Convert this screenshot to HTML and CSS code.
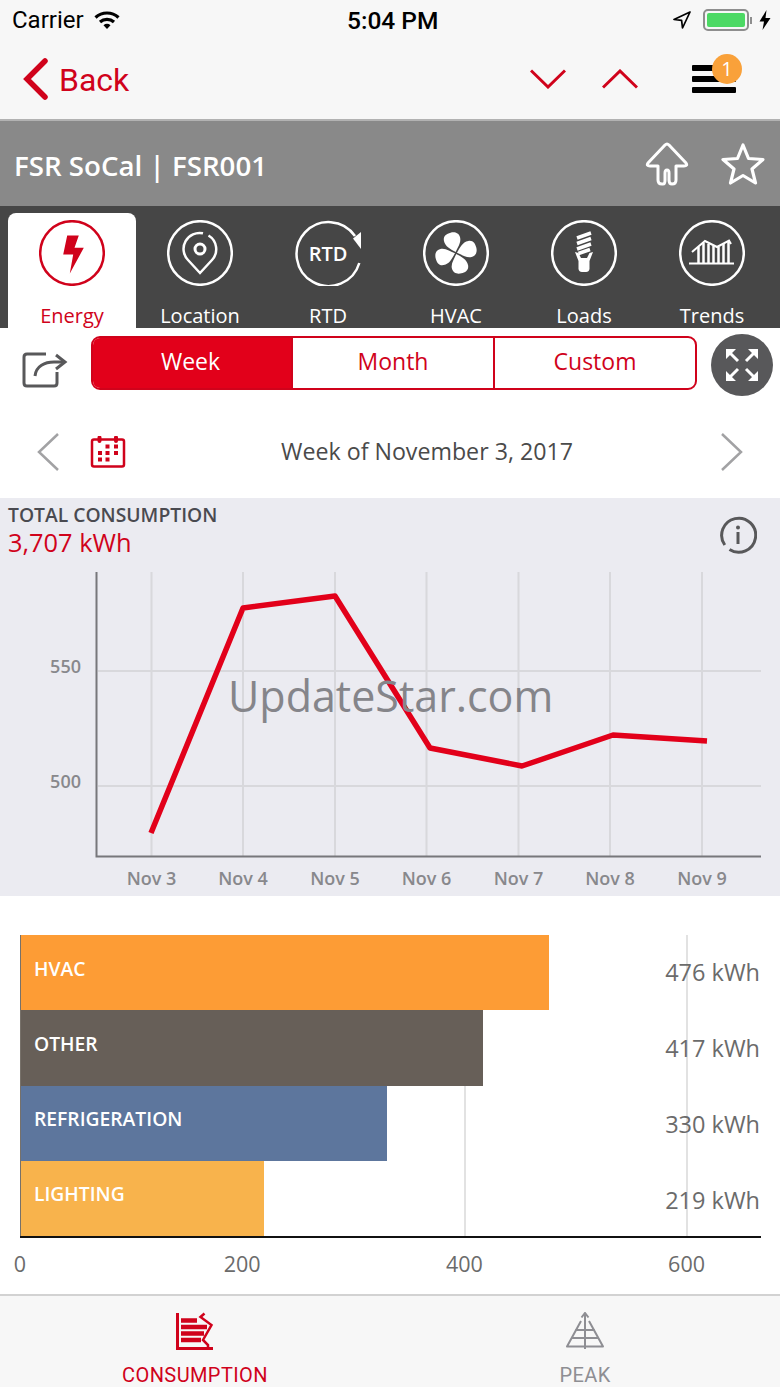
FILE: index.html
```html
<!DOCTYPE html>
<html lang="en">
<head>
    <meta charset="UTF-8">
    <meta name="viewport" content="width=device-width, initial-scale=1.0">
    <title>FSR SoCal Energy</title>
    <link rel="stylesheet" href="styles.css">
</head>
<body>
    <div class="status-bar">
        <div class="status-left">
            <span>Carrier</span>
            <svg class="wifi" viewBox="0 0 26 20" width="26" height="20">
                <path d="M1.5 7.5C8 1.5 18 1.5 24.5 7.5" fill="none" stroke="#000" stroke-width="3.2"/>
                <path d="M6 12C10 8.4 16 8.4 20 12" fill="none" stroke="#000" stroke-width="3.2"/>
                <path d="M9.5 15.2C11.6 13.4 14.4 13.4 16.5 15.2L13 19Z" fill="#000"/>
            </svg>
        </div>
        <div class="status-time">5:04 PM</div>
        <div class="status-right">
            <svg class="location-arrow" viewBox="0 0 18 18" width="18" height="18">
                <path d="M17 1L1 8.5L8.6 9.4L9.5 17Z" fill="none" stroke="#000" stroke-width="1.7" stroke-linejoin="round"/>
            </svg>
            <div class="battery"><div class="battery-fill"></div></div>
            <div class="battery-nub"></div>
            <svg viewBox="0 0 12 20" width="12" height="20">
                <path d="M7.5 0L0.5 11.5H5L3.5 20L11.5 8H6.5Z" fill="#000"/>
            </svg>
        </div>
    </div>

    <div class="nav-bar">
        <div class="back">
            <svg viewBox="0 0 28 42" width="28" height="42">
                <path d="M24 3L6 21L24 39" fill="none" stroke="#d0021b" stroke-width="5.5" stroke-linecap="round"/>
            </svg>
            <span>Back</span>
        </div>
        <div class="nav-actions">
            <svg viewBox="0 0 36 20" width="36" height="20">
                <path d="M1 1.5L18 18L35 1.5" fill="none" stroke="#d0021b" stroke-width="3"/>
            </svg>
            <svg viewBox="0 0 36 20" width="36" height="20">
                <path d="M1 18.5L18 2L35 18.5" fill="none" stroke="#d0021b" stroke-width="3"/>
            </svg>
            <div class="menu">
                <div class="menu-line"></div>
                <div class="menu-line"></div>
                <div class="menu-line"></div>
                <div class="badge">1</div>
            </div>
        </div>
    </div>

    <div class="title-bar">
        <h1>FSR SoCal | FSR001</h1>
        <div class="title-icons">
            <svg viewBox="0 0 44 44" width="44" height="44">
                <path d="M13 24V38Q13 42 17 42H18Q20 42 20 38V31Q20 28 22 28Q24 28 24 31V38Q24 42 27 42Q31 42 31 38V24H39Q43 24 41 21L24 3Q22 1 20 3L3 21Q1 24 5 24Z" fill="none" stroke="#fff" stroke-width="3" stroke-linejoin="round"/>
            </svg>
            <svg viewBox="0 0 44 44" width="44" height="44">
                <path d="M22 3L27.5 16.5L42 17.500L31 27L34.500 41L22 33.500L9.500 41L13 27L2 17.500L16.500 16.500Z" fill="none" stroke="#fff" stroke-width="3.200" stroke-linejoin="round"/>
            </svg>
        </div>
    </div>

    <div class="tabs">
        <div class="tab tab-active">
            <svg class="tab-icon" viewBox="0 0 66 66">
                <circle cx="33" cy="33" r="31.800"/>
                <path class="solid" d="M28.200 15.500H39.800L35.500 27.800H44.800L30.800 53.500L34.200 34.500H24.200Z"/>
            </svg>
            <span>Energy</span>
        </div>
        <div class="tab">
            <svg class="tab-icon" viewBox="0 0 66 66">
                <circle cx="33" cy="33" r="31.800"/>
                <path d="M36 13.300A16 16 0 0 0 21 40L33 53L45 40A16 16 0 0 0 41.500 15.500"/>
                <circle class="pin-dot" cx="33" cy="29" r="5"/>
            </svg>
            <span>Location</span>
        </div>
        <div class="tab">
            <svg class="tab-icon" viewBox="0 0 66 66">
                <path d="M64.300 43A32 32 0 1 1 60 16"/>
                <path class="solid" d="M66 12V29L58 18.500Z"/>
                <text class="rtd-text" x="33" y="40.500" text-anchor="middle">RTD</text>
            </svg>
            <span>RTD</span>
        </div>
        <div class="tab">
            <svg class="tab-icon" viewBox="0 0 66 66">
                <circle cx="33" cy="33" r="31.800"/>
                <g class="solid">
                    <path d="M33 32C29 28 24 24 24.500 18C25 13 29 12 33 12C37 12 41 14 41 19C41 24 36 28 33 32Z" transform="rotate(-15 33 33)"/>
                    <path d="M33 32C29 28 24 24 24.500 18C25 13 29 12 33 12C37 12 41 14 41 19C41 24 36 28 33 32Z" transform="rotate(75 33 33)"/>
                    <path d="M33 32C29 28 24 24 24.500 18C25 13 29 12 33 12C37 12 41 14 41 19C41 24 36 28 33 32Z" transform="rotate(165 33 33)"/>
                    <path d="M33 32C29 28 24 24 24.500 18C25 13 29 12 33 12C37 12 41 14 41 19C41 24 36 28 33 32Z" transform="rotate(255 33 33)"/>
                </g>
            </svg>
            <span>HVAC</span>
        </div>
        <div class="tab">
            <svg class="tab-icon" viewBox="0 0 66 66">
                <circle cx="33" cy="33" r="31.800"/>
                <path class="thick" d="M26 18L40 13M26 23.500L40 18.500M26 29L40 24M27.500 33.500L39 29.500"/>
                <path class="solid" d="M24 32L27.500 33L30 38H36L38.500 33L42 32L38.500 41V49Q38 52 35 52H31Q28 52 27.500 49V41Z"/>
            </svg>
            <span>Loads</span>
        </div>
        <div class="tab">
            <svg class="tab-icon" viewBox="0 0 66 66">
                <circle cx="33" cy="33" r="31.800"/>
                <path class="thin" d="M10 43.500H55"/>
                <path class="thin" d="M13 32L26 21L38 27L50 20.500L52 24"/>
                <path class="bars" d="M19.500 27V43M24.500 23V43M29.500 24V43M34.500 26V43M39.500 27V43M44.500 24V43M49.500 21V43"/>
            </svg>
            <span>Trends</span>
        </div>
    </div>

    <div class="toolbar">
        <svg class="share" viewBox="0 0 46 38" width="46" height="38">
            <path d="M24 3H5Q2 3 2 6V32Q2 35 5 35H32Q35 35 35 32V21" fill="none" stroke="#58585a" stroke-width="3"/>
            <path d="M13 25C14 15 23 11 32 11H41" fill="none" stroke="#58585a" stroke-width="3"/>
            <path d="M34 4L43 11L34 18" fill="none" stroke="#58585a" stroke-width="3"/>
        </svg>
        <div class="segments">
            <div class="segment segment-active">Week</div>
            <div class="segment">Month</div>
            <div class="segment">Custom</div>
        </div>
        <div class="expand">
            <svg viewBox="0 0 32 32" width="32" height="32">
                <path class="expand-head" d="M0 0H10L0 10ZM32 0H22L32 10ZM0 32H10L0 22ZM32 32H22L32 22Z"/>
                <path class="expand-shaft" d="M4 4L12 12M28 4L20 12M4 28L12 20M28 28L20 20"/>
            </svg>
        </div>
    </div>

    <div class="date-row">
        <svg class="date-chevron" viewBox="0 0 24 38" width="24" height="38">
            <path d="M22 1L3 19L22 37" fill="none" stroke="#a2a2a4" stroke-width="2.500"/>
        </svg>
        <svg class="calendar" viewBox="0 0 36 32" width="36" height="32">
            <rect x="2" y="3.500" width="32" height="27" rx="2" fill="none" stroke="#d0021b" stroke-width="2.500"/>
            <path d="M9.500 1.500V5M26 1.500V5" stroke="#d0021b" stroke-width="4" stroke-linecap="round"/>
            <path d="M15.500 8.500h4v4h-4zM24 8.500h4v4h-4zM8 15h4v4h-4zM15.500 15h4v4h-4zM24 15h4v4h-4zM8 21.500h4v4h-4zM15.500 21.500h4v4h-4z" fill="#d0021b"/>
        </svg>
        <div class="date-text">Week of November 3, 2017</div>
        <svg class="date-chevron" viewBox="0 0 24 38" width="24" height="38">
            <path d="M2 1L21 19L2 37" fill="none" stroke="#a2a2a4" stroke-width="2.500"/>
        </svg>
    </div>

    <section class="line-section">
        <div class="line-head">
            <div>
                <div class="total-label">TOTAL CONSUMPTION</div>
                <div class="total-value">3,707 kWh</div>
            </div>
            <svg class="info" viewBox="0 0 38 38" width="38" height="38">
                <path d="M10.500 33.500A17 17 0 1 0 5.800 29" fill="none" stroke="#58585a" stroke-width="3"/>
                <circle cx="19" cy="11.500" r="2" fill="#58585a"/>
                <path d="M19 16V28" stroke="#58585a" stroke-width="3"/>
            </svg>
        </div>
        <svg class="line-chart" viewBox="0 0 780 330" width="780" height="330">
            <path class="grid" d="M98 105H761M98 220H761M151.500 6V290M243 6V290M335 6V290M426.500 6V290M518.500 6V290M610 6V290M702 6V290"/>
            <path class="axis" d="M96.500 6V290.500H761"/>
            <polyline class="series" points="151,267 243,42 335,30 430,182 522,200 613,169 707,175"/>
            <g class="y-labels">
                <text x="81" y="107">550</text>
                <text x="81" y="222">500</text>
            </g>
            <g class="x-labels">
                <text x="151.500" y="319">Nov 3</text>
                <text x="243" y="319">Nov 4</text>
                <text x="335" y="319">Nov 5</text>
                <text x="426.500" y="319">Nov 6</text>
                <text x="518.500" y="319">Nov 7</text>
                <text x="610" y="319">Nov 8</text>
                <text x="702" y="319">Nov 9</text>
            </g>
        </svg>
        <div class="watermark">UpdateStar.com</div>
    </section>

    <section class="bar-section">
        <div class="bar-chart">
            <div class="bar-grid" style="left: 444px"></div>
            <div class="bar-grid" style="left: 666px"></div>
            <div class="bar-row">
                <div class="bar bar-hvac" style="width: 529px">HVAC</div>
            </div>
            <div class="bar-row">
                <div class="bar bar-other" style="width: 463px">OTHER</div>
            </div>
            <div class="bar-row">
                <div class="bar bar-refrigeration" style="width: 367px">REFRIGERATION</div>
            </div>
            <div class="bar-row">
                <div class="bar bar-lighting" style="width: 244px">LIGHTING</div>
            </div>
            <div class="bar-values">
                <div>476 kWh</div>
                <div>417 kWh</div>
                <div>330 kWh</div>
                <div>219 kWh</div>
            </div>
        </div>
        <div class="ticks">
            <span>0</span>
            <span>200</span>
            <span>400</span>
            <span>600</span>
        </div>
    </section>

    <div class="bottom-tabs">
        <div class="bottom-tab bottom-tab-active">
            <svg viewBox="0 0 38 38" width="38" height="38">
                <path d="M1.500 1V36.500H37" fill="none" stroke="currentColor" stroke-width="3"/>
                <path d="M28.500 1.500L24.500 5L35.500 13L27 28L32 33V36" fill="none" stroke="currentColor" stroke-width="2.500"/>
                <path d="M5 8.500H21M5 15H31M5 21.500H28M5 28H25" stroke="currentColor" stroke-width="4.500"/>
            </svg>
            <span>CONSUMPTION</span>
        </div>
        <div class="bottom-tab">
            <svg viewBox="0 0 38 38" width="38" height="38">
                <path d="M15 9L1 34.500H37L23 9" fill="none" stroke="currentColor" stroke-width="2" stroke-linejoin="round"/>
                <path d="M19 1V37M15.500 5.500L19 1L22.500 5.500M9.500 18H28.500M5.500 26H32.500" fill="none" stroke="currentColor" stroke-width="2"/>
            </svg>
            <span>PEAK</span>
        </div>
    </div>
</body>
</html>
```

FILE: styles.css
```css
* { box-sizing: border-box; }
body { margin: 0; width: 780px; height: 1387px; overflow: hidden; background: #fff; font-family: "Open Sans", sans-serif; color: #4a4a4a; }
svg { display: block; flex-shrink: 0; }

.status-bar { height: 40px; padding: 0 9px 0 12px; display: flex; justify-content: space-between; align-items: center; background: #f7f7f7; font-family: Roboto, sans-serif; font-size: 24px; color: #000; position: relative; }
.status-left { display: flex; align-items: center; gap: 10px; }
.status-time { position: absolute; left: 347px; font-size: 24.500px; font-weight: 500; }
.status-right { display: flex; align-items: center; }
.location-arrow { margin-right: 12px; }
.battery { width: 46px; height: 22px; border: 2px solid #8e8e8e; border-radius: 5px; padding: 2px; }
.battery-fill { height: 100%; background: #4cd964; border-radius: 2px; }
.battery-nub { width: 2px; height: 7px; margin: 0 7px 0 1px; background: #8e8e8e; }

.nav-bar { height: 81px; padding: 0 44px 2px 21px; display: flex; justify-content: space-between; align-items: center; background: #f7f7f7; border-bottom: 2px solid #b2b2b2; }
.back { display: flex; align-items: center; gap: 10px; font-family: Roboto, sans-serif; font-size: 32px; color: #d0021b; }
.back span { padding-top: 2px; }
.nav-actions { display: flex; align-items: center; gap: 36px; }
.menu { position: relative; width: 44px; margin-left: 18px; display: flex; flex-direction: column; gap: 5px; }
.menu-line { height: 6px; background: #000; border-radius: 1px; }
.badge { position: absolute; left: 20px; top: -11px; width: 30px; height: 30px; border-radius: 50%; background: #f9a13a; color: #fff; font-size: 20px; line-height: 30px; text-align: center; }

.title-bar { height: 85px; padding: 0 15px 0 14px; display: flex; justify-content: space-between; align-items: center; background: #898989; }
.title-bar h1 { margin: 0; padding-top: 3px; font-size: 27.700px; font-weight: 600; color: #fff; }
.title-icons { display: flex; gap: 32px; }

.tabs { height: 122px; padding: 7px 0 0 8px; display: flex; background: #464646; }
.tab { flex: 0 0 128px; display: flex; flex-direction: column; align-items: center; padding-top: 7px; color: #fff; font-size: 20px; line-height: 24px; overflow: hidden; }
.tab-active { background: #fff; border-radius: 8px 8px 0 0; color: #d0021b; }
.tab-icon { width: 66px; height: 66px; margin-bottom: 18px; fill: none; stroke: currentColor; stroke-width: 2.500; }
.tab-icon .solid { fill: currentColor; stroke: none; }
.tab-icon .thick { stroke-width: 3.500; }
.tab-icon .thin { stroke-width: 2; }
.tab-icon .bars { stroke-width: 2.500; }
.tab-icon .pin-dot { stroke-width: 3; }
.tab-icon .rtd-text { fill: currentColor; stroke: none; font-size: 20px; font-weight: 600; }

.toolbar { height: 68px; padding: 8px 7px 6px 22px; display: flex; align-items: flex-start; background: #fff; }
.share { margin: 15px 23px 0 0; }
.segments { width: 606px; height: 54px; margin-right: 14px; display: grid; grid-template-columns: 198px 202px 202px; border: 2px solid #d0021b; border-radius: 9px; overflow: hidden; }
.segment { padding-bottom: 4px; display: flex; align-items: center; justify-content: center; font-size: 23px; color: #d0021b; }
.segment + .segment { border-left: 2px solid #d0021b; }
.segment-active { padding-right: 3px; background: #e2001a; color: #fff; }
.expand { width: 62px; height: 62px; margin-top: -2px; border-radius: 50%; background: #58585a; display: flex; align-items: center; justify-content: center; }
.expand-head { fill: #fff; }
.expand-shaft { stroke: #fff; stroke-width: 3; }

.date-row { height: 102px; padding: 9px 36px 0; display: flex; align-items: center; background: #fff; }
.calendar { margin-left: 30px; }
.date-text { flex: 1; margin-top: -2px; padding-left: 8px; text-align: center; font-size: 23.200px; color: #4a4a4a; }

.line-section { position: relative; height: 398px; background: #ebebf1; }
.line-head { height: 68px; padding: 3px 23px 0 8px; display: flex; justify-content: space-between; align-items: flex-start; }
.total-label { font-size: 19.300px; line-height: 28px; font-weight: 600; color: #4a4a50; }
.total-value { margin-top: -1px; font-size: 25.400px; line-height: 28px; color: #d0021b; }
.info { margin-top: 15px; }
.grid { fill: none; stroke: #d8d8dc; stroke-width: 2; }
.axis { fill: none; stroke: #77777b; stroke-width: 2; }
.series { fill: none; stroke: #e2001a; stroke-width: 5.500; stroke-linejoin: round; }
.y-labels text, .x-labels text { font-size: 18px; font-weight: 600; fill: #88888c; }
.y-labels text { text-anchor: end; }
.x-labels text { text-anchor: middle; }
.watermark { position: absolute; left: 228px; top: 168px; font-size: 43px; line-height: 60px; color: #85858a; }

.bar-section { height: 398px; padding-top: 39px; background: #fff; }
.bar-chart { position: relative; margin: 0 19px 0 20px; border-bottom: 2px solid #111; }
.bar-grid { position: absolute; top: 0; bottom: 0; width: 2px; background: #e2e2e2; }
.bar-row { position: relative; height: 75.250px; }
.bar { height: 100%; padding: 0 0 9px 13px; display: flex; align-items: center; border-left: 1px solid #77716a; font-size: 19.300px; font-weight: 600; color: #fff; }
.bar-hvac { background: #fd9c35; }
.bar-other { background: #675f58; }
.bar-refrigeration { background: #5d769d; }
.bar-lighting { background: #f8b34c; }
.bar-values { position: absolute; right: 1px; top: -1px; font-size: 23.500px; line-height: 76px; text-align: right; color: #6b6b6b; }

.ticks { margin-top: 11px; display: flex; gap: 182.200px; font-size: 21.500px; color: #6b6b6b; }
.ticks span { width: 40px; text-align: center; }

.bottom-tabs { height: 93px; display: flex; background: #f7f7f7; border-top: 2px solid #d2d2d2; font-family: Roboto, sans-serif; font-size: 20px; letter-spacing: 0.400px; }
.bottom-tab { flex: 1; display: flex; flex-direction: column; align-items: center; padding-top: 16px; gap: 13px; color: #8e8e93; }
.bottom-tab-active { color: #d0021b; }
```
